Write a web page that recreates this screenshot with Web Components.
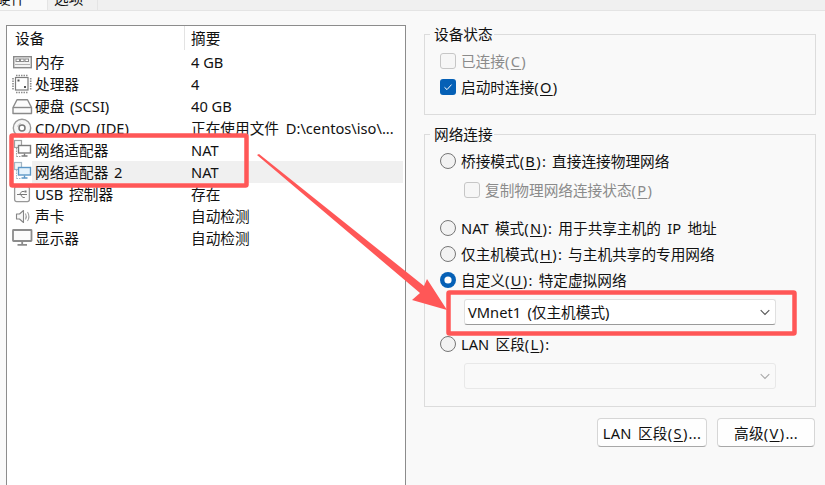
<!DOCTYPE html>
<html>
<head>
<meta charset="utf-8">
<title>虚拟机设置</title>
<style>
  html, body { margin: 0; padding: 0; width: 825px; height: 485px; overflow: hidden; background: #f9f9f9; }
  body { font: 14.67px/20px "Noto Sans", "Noto Sans CJK SC", sans-serif; color: #111; }
</style>
</head>
<body>
<settings-page></settings-page>

<script>
const FONT = `"Noto Sans", "Noto Sans CJK SC", sans-serif`;

const svg = body => `<svg width="22" height="22" viewBox="0 0 22 22" fill="none">${body}</svg>`;

// both network rows share one drawing, only the colours differ
const netIcon = (tower, towerFill, screen, screenFill) => svg(`
  <path d="M4.500 9v8.500M4.500 17.500h4" stroke="${tower}" stroke-dasharray="1.500 1"/>
  <rect x="2.500" y="1.500" width="7" height="7" fill="${towerFill}" stroke="${tower}" stroke-width="1.200"/>
  <rect x="6.500" y="6.500" width="12" height="7.500" fill="${screenFill}" stroke="${screen}" stroke-width="1.400"/>
  <path d="M12.500 14.500v2M9.500 17h6" stroke="${screen}" stroke-width="1.400"/>`);

const ICONS = {
  memory: svg(`<rect x="1.700" y="5.700" width="17.600" height="11" fill="#f3f3f3" stroke="#8a8a8a" stroke-width="1.400"/>
    <rect x="4" y="8" width="3.500" height="2.500" fill="#fff" stroke="#8a8a8a"/><rect x="8.500" y="8" width="3.500" height="2.500" fill="#fff" stroke="#8a8a8a"/><rect x="13" y="8" width="3.500" height="2.500" fill="#fff" stroke="#8a8a8a"/>
    <path d="M3 13.500h15" stroke="#b0b0b0"/>`),
  cpu: svg(`<rect x="3.500" y="4.500" width="12.500" height="12.500" fill="#fff" stroke="#7d7d7d" stroke-width="1.200"/>
    <path d="M4 2.500h12M4 19.500h12M1 5v12M18.700 5v12" stroke="#8c8c8c" stroke-width="1.600" stroke-dasharray="1.500 1"/>
    <rect x="5.500" y="6.500" width="2" height="2" fill="#555"/><rect x="12" y="13" width="2" height="2" fill="#555"/>`),
  disk: svg(`<path d="M1 12.500 5 4.700h10.500l4 7.800v6H1z" fill="#fbfbfb" stroke="#8a8a8a" stroke-width="1.400" stroke-linejoin="round"/>
    <path d="M1 12.500h18.500" stroke="#8a8a8a" stroke-width="1.400"/>`),
  cd: svg(`<circle cx="10" cy="11" r="8.700" fill="#f6f6f6" stroke="#9a9a9a" stroke-width="1.400"/>
    <circle cx="10" cy="11" r="3" fill="#fff" stroke="#777" stroke-width="1.500"/>
    <path d="M5.500 9.500a5 5 0 0 1 3-3" stroke="#bbb"/>`),
  net: netIcon('#a0a0a0', '#f5f5f5', '#7c7c7c', '#fdfdfd'),
  netActive: netIcon('#a3b6c4', '#f0f5f8', '#5c97c6', '#e6f3fc'),
  usb: svg(`<rect x="2.600" y="3.600" width="14.800" height="15" rx="2" fill="#fbfbfb" stroke="#989898" stroke-width="1.300"/>
    <path d="M5 11.500h10M7.500 11.500l2.300-3h2.700M8.500 11.500l2.300 3h2" stroke="#787878"/><rect x="12.500" y="7.500" width="2" height="2" fill="#787878"/>`),
  sound: svg(`<path d="M4.500 9h3l4-3.500v12l-4-3.500h-3z" fill="#f7f7f7" stroke="#858585" stroke-width="1.100" stroke-linejoin="round"/>
    <path d="M13.500 8.500c1 1.800 1 4.200 0 6M15.500 7c1.700 2.700 1.700 6.300 0 9" stroke="#a0a0a0" stroke-width="1.100"/>`),
  display: svg(`<rect x="1" y="3" width="18.500" height="11" rx=".5" fill="#fbfbfb" stroke="#8c8c8c" stroke-width="1.800"/>
    <path d="M10.200 14.500v2.500M5.500 17.800h9.500" stroke="#8c8c8c" stroke-width="1.800"/>`)
};

const CHEVRON = c => `<svg width="10" height="7" viewBox="0 0 10 7" fill="none"><path d="M.7 1.200 5 5.500l4.300-4.300" stroke="${c}" stroke-width="1.100"/></svg>`;

class SettingsTabs extends HTMLElement {
  constructor() {
    super();
    this.attachShadow({ mode: 'open' }).innerHTML = `
      <style>
        :host { display: flex; height: 10px; background: #f0f0f0; border-bottom: 1px solid #e4e4e4; overflow: hidden; }
        .tab { line-height: 20px; margin-top: -12px; flex: none; height: 32px; box-sizing: border-box; }
        .on { width: 47px; background: #f9f9f9; text-indent: -4px; }
        .off { width: 51px; padding-left: 6px; border-right: 1px solid #e4e4e4; border-left: 1px solid #e4e4e4; }
      </style>
      <div class="tab on">硬件</div><div class="tab off">选项</div>`;
  }
}

class MnKey extends HTMLElement {
  constructor() {
    super();
    this.attachShadow({ mode: 'open' }).innerHTML = `<style>
        :host { display: inline; letter-spacing: 1.300px; }
        u { text-underline-offset: 2px; }
      </style>(<u><slot></slot></u>)`;
  }
}

class DeviceRow extends HTMLElement {
  static get observedAttributes() { return ['icon', 'name', 'summary']; }
  constructor() {
    super();
    this.attachShadow({ mode: 'open' });
  }
  connectedCallback() { this.render(); }
  attributeChangedCallback() { this.render(); }
  render() {
    this.shadowRoot.innerHTML = `
      <style>
        :host { display: grid; grid-template-columns: 184px 1fr; height: 22px; line-height: 22px; white-space: nowrap; }
        :host([active]) { background: linear-gradient(to right, transparent 25px, #f0f0f0 25px); margin-right: 2px; }
        .name { display: flex; word-spacing: 2px; }
        .icon { width: 28px; height: 22px; padding-left: 5px; box-sizing: border-box; flex: none; }
        .icon svg { display: block; }
        .val { overflow: hidden; }
        :host([spaced]) .val { word-spacing: 3px; }
      </style>
      <div class="name"><span class="icon">${ICONS[this.getAttribute('icon')] || ''}</span><span>${this.getAttribute('name') || ''}</span></div>
      <div class="val">${this.getAttribute('summary') || ''}</div>`;
  }
}

class DevicePanel extends HTMLElement {
  constructor() {
    super();
    this.attachShadow({ mode: 'open' }).innerHTML = `
      <style>
        :host { display: block; width: 400px; height: 460px; box-sizing: border-box; background: #fff; border: 1px solid #8c8c8c; border-bottom: 0; }
        .head { display: grid; grid-template-columns: 169px 1fr; height: 25px; line-height: 25px; padding-left: 8px; }
        .head span + span { border-left: 1px solid #e3e3e3; padding-left: 6px; height: 24px; }
      </style>
      <div class="head"><span>设备</span><span>摘要</span></div>
      <slot></slot>`;
  }
}

class OptionGroup extends HTMLElement {
  constructor() {
    super();
    this.attachShadow({ mode: 'open' });
  }
  connectedCallback() {
    this.shadowRoot.innerHTML = `
      <style>
        :host { display: flex; flex-direction: column; box-sizing: border-box; border: 1px solid #dcdcdc; padding: 0 15px; }
        .legend { align-self: flex-start; margin: -11px 0 0 -10px; padding: 0 1px 0 4px; height: 20px; line-height: 20px; background: #f9f9f9; }
      </style>
      <div class="legend">${this.getAttribute('label')}</div>
      <slot></slot>`;
  }
}

class OptionItem extends HTMLElement {
  constructor() {
    super();
    this.attachShadow({ mode: 'open' });
  }
  connectedCallback() {
    const radio = this.getAttribute('type') === 'radio';
    const on = this.hasAttribute('checked');
    let mark;
    if (radio) {
      mark = on
        ? `<circle cx="8" cy="8" r="8" fill="#0560b6"/><circle cx="8" cy="8" r="3.600" fill="#fff"/>`
        : `<circle cx="8" cy="8" r="7.500" fill="#f2f2f2" stroke="#767676"/>`;
    } else {
      mark = on
        ? `<rect width="16" height="16" rx="3" fill="#0560b6"/><path d="M4.500 8.300 7 10.600l4.500-5" fill="none" stroke="#fff"/>`
        : `<rect x=".5" y=".5" width="15" height="15" rx="2.500" fill="#f6f6f6" stroke="#c6c6c6"/>`;
    }
    this.shadowRoot.innerHTML = `
      <style>
        :host { display: flex; align-items: center; gap: 5px; height: 26px; white-space: nowrap; word-spacing: 2.500px; }
        :host([disabled]) { color: #8b8b8b; }
        svg { flex: none; }
      </style>
      <svg width="16" height="16" viewBox="0 0 16 16">${mark}</svg><span><slot></slot></span>`;
  }
}

class DropSelect extends HTMLElement {
  constructor() {
    super();
    this.attachShadow({ mode: 'open' });
  }
  connectedCallback() {
    const off = this.hasAttribute('disabled');
    this.shadowRoot.innerHTML = `
      <style>
        :host { display: flex; align-items: center; justify-content: space-between; box-sizing: border-box; width: 312px; height: 26px; padding: 0 5px 0 3px; background: #fff; border: 1px solid #e0e0e0; border-bottom-color: #9a9a9a; border-radius: 3px; white-space: nowrap; word-spacing: 2.500px; }
        :host([disabled]) { background: #f9f9f9; border-color: #e8e8e8; }
      </style>
      <span><slot></slot></span>${CHEVRON(off ? '#a8a8a8' : '#555')}`;
  }
}

class PushButton extends HTMLElement {
  constructor() {
    super();
    this.attachShadow({ mode: 'open' }).innerHTML = `
      <style>
        :host { display: flex; align-items: center; justify-content: center; box-sizing: border-box; height: 29px; background: #fefefe; border: 1px solid #d6d6d6; border-bottom-color: #a8a8a8; border-radius: 4px; white-space: nowrap; word-spacing: 2px; letter-spacing: .3px; }
      </style>
      <span><slot></slot></span>`;
  }
}

// red marks drawn on the screenshot, they lie over everything else
class RedMarks extends HTMLElement {
  constructor() {
    super();
    this.attachShadow({ mode: 'open' }).innerHTML = `
      <style>
        :host { position: absolute; left: 0; top: 0; width: 825px; height: 485px; pointer-events: none; }
      </style>
      <svg width="825" height="485" viewBox="0 0 825 485">
        <rect x="11.500" y="135.500" width="235" height="50" rx="1" fill="none" stroke="#ff5757" stroke-width="4.500"/>
        <rect x="448.500" y="292.500" width="346" height="41" rx="1" fill="none" stroke="#ff5757" stroke-width="4.500"/>
        <polygon points="257,155 259,154 424,286 427,279 447,310 412,300 420,293" fill="#ff5757"/>
      </svg>`;
  }
}

class SettingsPage extends HTMLElement {
  constructor() {
    super();
    this.attachShadow({ mode: 'open' }).innerHTML = `
      <style>
        :host { display: block; position: relative; width: 825px; height: 485px; overflow: hidden; font: 14.67px/20px ${FONT}; color: #111; }
        .main { display: flex; padding: 14px 0 0 6px; }
        .right { display: flex; flex-direction: column; width: 392px; margin: 9px 0 0 18px; }
        .g1 { height: 81px; }
        .g2 { height: 273px; margin-top: 19px; }
        .g1 option-item:first-of-type { margin-top: 4px; }
        .g2 option-item:first-of-type { margin-top: 4px; }
        .sub { margin: 3px 0 0 24px; }
        .nat { margin-top: 12px; }
        drop-select { margin: 6px 0 0 24px; flex: none; }
        .lan { margin-top: 6px; }
        .buttons { display: flex; justify-content: flex-end; gap: 10px; margin: 11px 1px 0 0; }
        .b1 { width: 110px; }
        .b2 { width: 98px; }
      </style>
      <settings-tabs></settings-tabs>
      <div class="main">
        <device-panel>
          <device-row icon="memory" name="内存" summary="4 GB"></device-row>
          <device-row icon="cpu" name="处理器" summary="4"></device-row>
          <device-row icon="disk" name="硬盘 (SCSI)" summary="40 GB"></device-row>
          <device-row icon="cd" name="CD/DVD (IDE)" summary="正在使用文件 D:\\centos\\iso\\..." spaced></device-row>
          <device-row icon="net" name="网络适配器" summary="NAT"></device-row>
          <device-row icon="netActive" name="网络适配器 2" summary="NAT" active></device-row>
          <device-row icon="usb" name="USB 控制器" summary="存在"></device-row>
          <device-row icon="sound" name="声卡" summary="自动检测"></device-row>
          <device-row icon="display" name="显示器" summary="自动检测"></device-row>
        </device-panel>
        <div class="right">
          <option-group class="g1" label="设备状态">
            <option-item type="check" disabled>已连接<mn-key>C</mn-key></option-item>
            <option-item type="check" checked>启动时连接<mn-key>O</mn-key></option-item>
          </option-group>
          <option-group class="g2" label="网络连接">
            <option-item type="radio">桥接模式<mn-key>B</mn-key>: 直接连接物理网络</option-item>
            <option-item class="sub" type="check" disabled>复制物理网络连接状态<mn-key>P</mn-key></option-item>
            <option-item class="nat" type="radio">NAT 模式<mn-key>N</mn-key>: 用于共享主机的 IP 地址</option-item>
            <option-item type="radio">仅主机模式<mn-key>H</mn-key>: 与主机共享的专用网络</option-item>
            <option-item type="radio" checked>自定义<mn-key>U</mn-key>: 特定虚拟网络</option-item>
            <drop-select>VMnet1 (仅主机模式)</drop-select>
            <option-item class="lan" type="radio">LAN 区段<mn-key>L</mn-key>:</option-item>
            <drop-select disabled></drop-select>
          </option-group>
          <div class="buttons">
            <push-button class="b1">LAN 区段<mn-key>S</mn-key>...</push-button>
            <push-button class="b2">高级<mn-key>V</mn-key>...</push-button>
          </div>
        </div>
      </div>
      <red-marks></red-marks>`;
  }
}

customElements.define('settings-tabs', SettingsTabs);
customElements.define('mn-key', MnKey);
customElements.define('device-row', DeviceRow);
customElements.define('device-panel', DevicePanel);
customElements.define('option-group', OptionGroup);
customElements.define('option-item', OptionItem);
customElements.define('drop-select', DropSelect);
customElements.define('push-button', PushButton);
customElements.define('red-marks', RedMarks);
customElements.define('settings-page', SettingsPage);
</script>
</body>
</html>
